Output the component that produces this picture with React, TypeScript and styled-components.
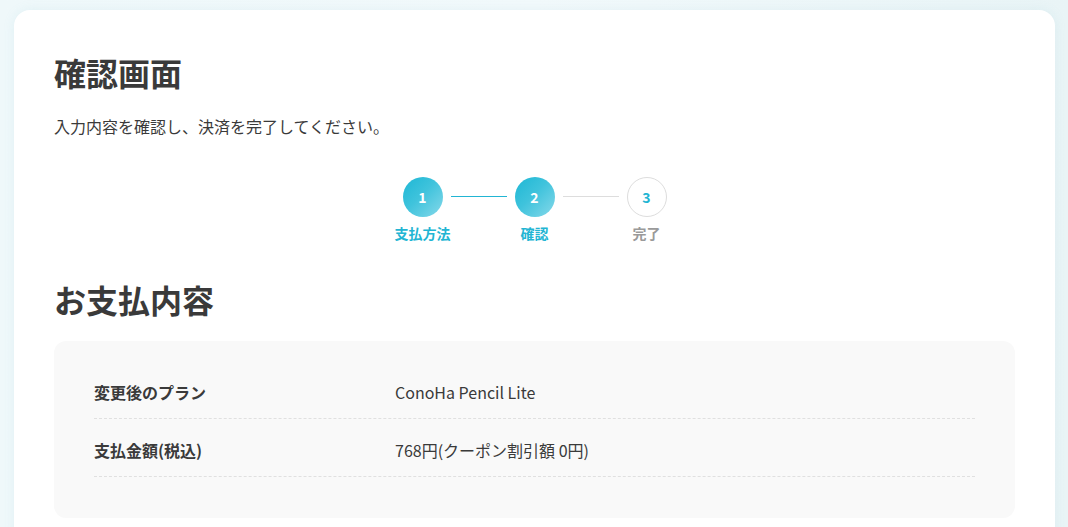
import React from "react";
import styled, { createGlobalStyle } from "styled-components";

const GlobalStyle = createGlobalStyle`
  html, body {
    margin: 0;
    padding: 0;
  }
  body {
    background: linear-gradient(90deg, #eff8fa 0%, #f2f9fb 50%, #e9f4f6 100%);
    font-family: "Noto Sans CJK JP", "Noto Sans", sans-serif;
    color: #3a3a3a;
    min-height: 100vh;
  }
`;

const Page = styled.div`
  padding: 10px 13px 0 14px;
`;

const Card = styled.main`
  background: #fff;
  border-radius: 16px 16px 0 0;
  padding: 38px 40px 40px;
  min-height: 560px;
  box-shadow: 0 0 12px rgba(120, 190, 205, 0.12);
`;

const Title = styled.h1`
  margin: 0;
  font-size: 32px;
  line-height: 48px;
  font-weight: 700;
  color: #3a3a3a;
`;

const Lead = styled.p`
  margin: 18px 0 0;
  font-size: 16px;
  line-height: 24px;
  color: #3a3a3a;
`;

const Stepper = styled.ol`
  list-style: none;
  margin: 39px 0 0;
  padding: 0;
  display: flex;
  justify-content: center;
  align-items: flex-start;
`;

const Step = styled.li`
  width: 40px;
  display: flex;
  flex-direction: column;
  align-items: center;
`;

const Circle = styled.span<{ $active: boolean }>`
  width: 40px;
  height: 40px;
  box-sizing: border-box;
  border-radius: 50%;
  display: flex;
  align-items: center;
  justify-content: center;
  font-size: 14px;
  font-weight: 700;
  line-height: 1;
  color: ${(p) => (p.$active ? "#fff" : "#22b5d3")};
  background: ${(p) =>
    p.$active ? "linear-gradient(135deg, #1db7d5 0%, #3fc3dc 45%, #86d9ea 100%)" : "#fff"};
  border: ${(p) => (p.$active ? "none" : "1px solid #dddddd")};
`;

const StepLabel = styled.span<{ $active: boolean }>`
  margin-top: 6px;
  font-size: 14px;
  line-height: 20px;
  font-weight: 700;
  white-space: nowrap;
  color: ${(p) => (p.$active ? "#22b5d3" : "#9a9a9a")};
`;

const Connector = styled.li<{ $done: boolean }>`
  width: 56px;
  height: 1px;
  margin: 19px 8px 0;
  background: ${(p) => (p.$done ? "#22b5d3" : "#dddddd")};
`;

const SectionTitle = styled.h2`
  margin: 32px 0 0;
  font-size: 32px;
  line-height: 48px;
  font-weight: 700;
  color: #3a3a3a;
`;

const SummaryBox = styled.section`
  margin-top: 18px;
  background: #f9f9f9;
  border-radius: 12px;
  padding: 20px 40px 41px;
`;

const Row = styled.dl`
  margin: 0;
  display: flex;
  padding: 19px 0 14px;
  border-bottom: 1px dashed #e0e0e0;
  font-size: 16px;
  line-height: 24px;
`;

const Label = styled.dt`
  width: 301px;
  flex: none;
  font-weight: 700;
  color: #3a3a3a;
`;

const Value = styled.dd`
  margin: 0;
  color: #3a3a3a;
`;

const steps = [
  { n: 1, label: "支払方法", active: true },
  { n: 2, label: "確認", active: true },
  { n: 3, label: "完了", active: false },
];

export default function App() {
  return (
    <>
      <GlobalStyle />
      <Page>
        <Card>
          <Title>確認画面</Title>
          <Lead>入力内容を確認し、決済を完了してください。</Lead>
          <Stepper>
            {steps.map((s, i) => (
              <React.Fragment key={s.n}>
                {i > 0 && <Connector $done={s.active} />}
                <Step>
                  <Circle $active={s.active}>{s.n}</Circle>
                  <StepLabel $active={s.active}>{s.label}</StepLabel>
                </Step>
              </React.Fragment>
            ))}
          </Stepper>
          <SectionTitle>お支払内容</SectionTitle>
          <SummaryBox>
            <Row>
              <Label>変更後のプラン</Label>
              <Value>ConoHa Pencil Lite</Value>
            </Row>
            <Row>
              <Label>支払金額(税込)</Label>
              <Value>768円(クーポン割引額 0円)</Value>
            </Row>
          </SummaryBox>
        </Card>
      </Page>
    </>
  );
}
